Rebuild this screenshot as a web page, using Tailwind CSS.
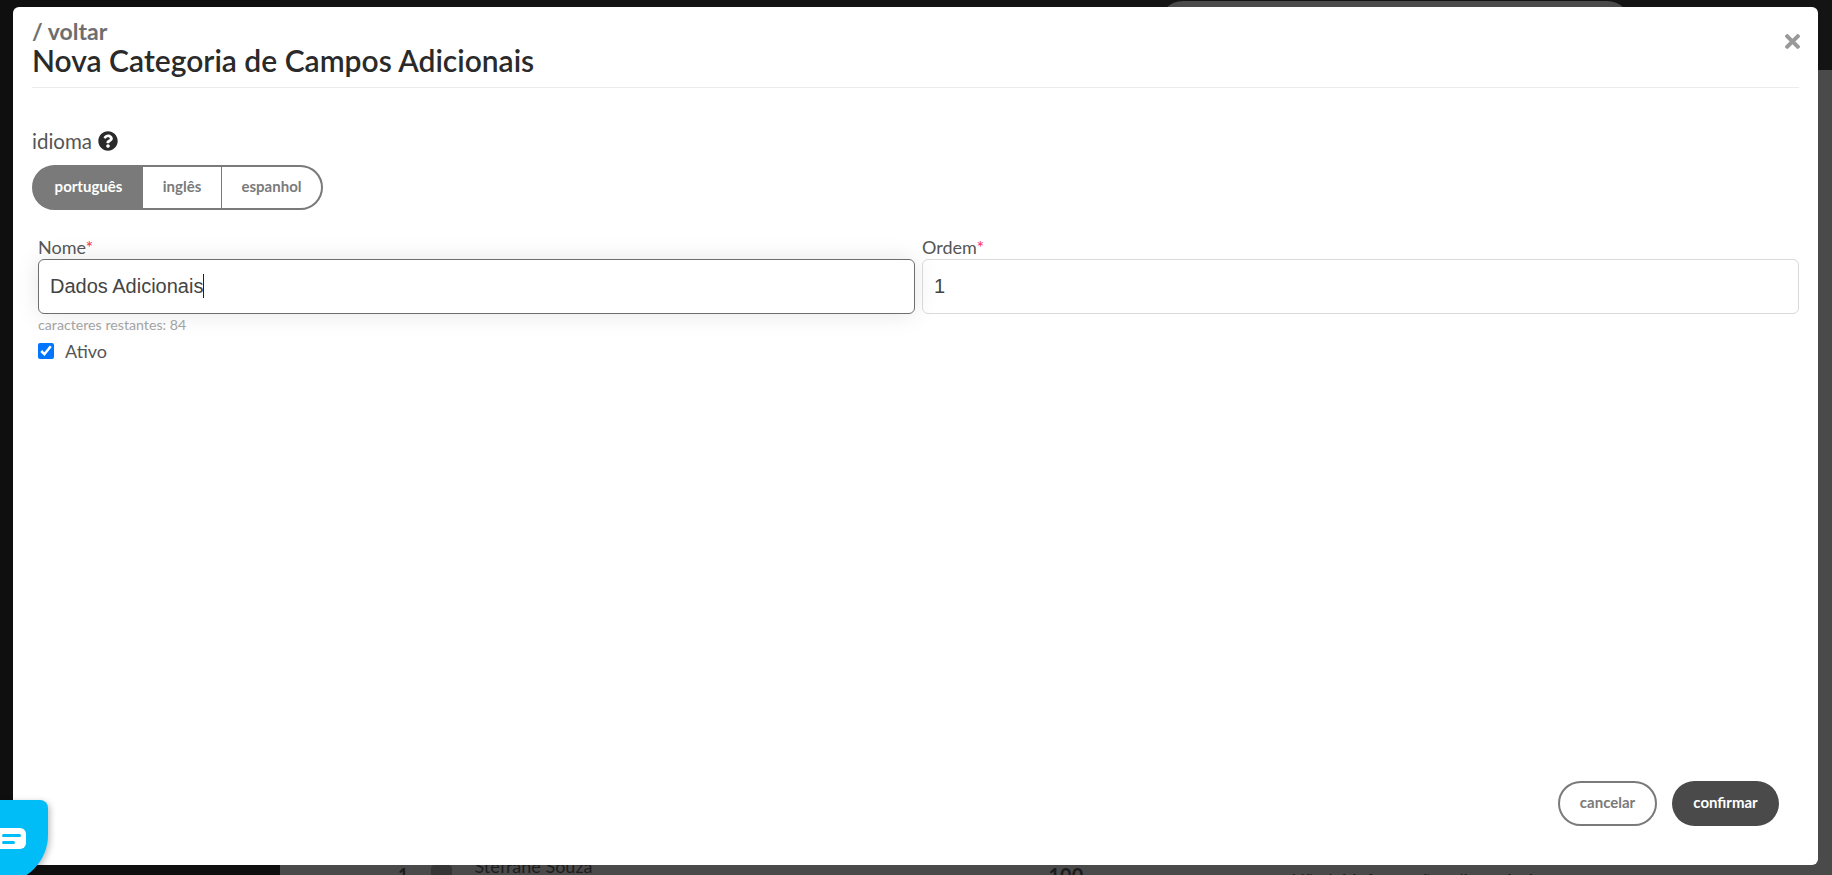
<!DOCTYPE html>
<html>

<head>
  <title>Nova Categoria de Campos Adicionais</title>
  <meta charset="UTF-8">
  <meta name="viewport" content="width=device-width, initial-scale=1.0">
  <script src="https://cdn.jsdelivr.net/npm/@tailwindcss/browser@4"></script>
</head>

<body class="h-[875px] overflow-hidden font-['Lato',sans-serif] bg-[#111111]">

  <!-- page behind the modal -->
  <div class="flex h-[875px]">
    <div class="w-[280px] bg-[#0f0f0f]"></div>
    <div class="flex-1 flex flex-col">
      <div class="h-[70px] bg-[#141414] flex justify-end pr-[201px]">
        <div class="w-[472px] h-[40px] rounded-t-[24px] mt-[1px] bg-[#4a4a4a]"></div>
      </div>
      <div class="flex-1 bg-[#4a4a4a] flex items-end text-[#1c1c1c]">
        <div class="h-[10px] flex items-start w-full">
          <span class="ml-[118px] text-lg font-bold leading-[18px] mt-[1px]">1</span>
          <span class="ml-[23px] w-[21px] h-[29px] shrink-0 bg-[#353535] rounded-t-[4px]"></span>
          <span class="ml-[22px] text-lg leading-[14px] -mt-[6px]">Stefrane Souza</span>
          <span class="ml-[456px] text-[20px] font-bold leading-[20px]">100</span>
          <span class="ml-[208px] text-[18px] leading-[18px] mt-[6px]">Não há informações disponíveis</span>
        </div>
      </div>
    </div>
  </div>

  <!-- modal -->
  <div class="absolute left-[13px] top-[7px] w-[1805px] h-[858px] bg-white rounded-[6px] flex flex-col px-[19px]">
    <div class="relative pt-[12px] border-b border-[#ececec] h-[81px]">
      <a class="block text-[23px] leading-[24px] font-bold text-[#6e6e6e]">/ voltar</a>
      <h1 class="text-[30px] leading-[34px] font-semibold text-[#2a2a2a]">Nova Categoria de Campos Adicionais</h1>
      <svg class="absolute right-[-1px] top-[27px] w-[15px] h-[15px] fill-[#999999]" viewBox="0 80 352 352">
        <path d="M242.72 256l100.07-100.07c12.28-12.28 12.28-32.19 0-44.48l-22.24-22.24c-12.28-12.28-32.19-12.28-44.48 0L176 189.28 75.93 89.21c-12.28-12.28-32.19-12.28-44.48 0L9.21 111.45c-12.28 12.28-12.28 32.19 0 44.48L109.28 256 9.21 356.07c-12.28 12.28-12.28 32.19 0 44.48l22.24 22.24c12.28 12.28 32.2 12.28 44.48 0L176 322.72l100.07 100.07c12.28 12.28 32.2 12.28 44.48 0l22.24-22.24c12.28-12.28 12.28-32.19 0-44.48L242.72 256z"/>
      </svg>
    </div>

    <div class="flex items-center gap-[6px] mt-[40px] h-[26px]">
      <span class="text-[20.5px] text-[#555555]">idioma</span>
      <svg class="w-[20px] h-[20px] fill-[#2a2a2a]" viewBox="0 0 512 512">
        <path d="M504 256c0 136.997-111.043 248-248 248S8 392.997 8 256C8 119.083 119.043 8 256 8s248 111.083 248 248zM262.655 90c-54.497 0-89.255 22.957-116.549 63.758-3.536 5.286-2.353 12.415 2.715 16.258l34.699 26.31c5.205 3.947 12.621 3.008 16.665-2.122 17.864-22.658 30.113-35.797 57.303-35.797 20.429 0 45.698 13.148 45.698 32.958 0 14.976-12.363 22.667-32.534 33.976C247.128 238.528 216 254.941 216 296v4c0 6.627 5.373 12 12 12h56c6.627 0 12-5.373 12-12v-1.333c0-28.462 83.186-29.647 83.186-106.667 0-58.002-60.165-102-116.531-102zM256 338c-25.365 0-46 20.635-46 46 0 25.364 20.635 46 46 46s46-20.636 46-46c0-25.365-20.635-46-46-46z"/>
      </svg>
    </div>

    <div class="flex w-[291px] h-[45px] mt-[11px] rounded-full border-2 border-[#7a7a7a] bg-[#7a7a7a] overflow-hidden text-[15px] font-bold text-[#7a7a7a]">
      <div class="w-[109px] pb-[2px] text-white flex items-center justify-center">português</div>
      <div class="w-[79px] pb-[2px] bg-white border-r border-[#7a7a7a] flex items-center justify-center">inglês</div>
      <div class="flex-1 pb-[2px] bg-white flex items-center justify-center">espanhol</div>
    </div>

    <div class="grid grid-cols-2 gap-x-[7px] mt-[26px] pl-[6px]">
      <div>
        <label class="block text-[18px] leading-[22px] text-[#555555]">Nome<span class="text-[#ff2d55]">*</span></label>
        <div class="mt-[1px] h-[55px] pb-[2px] flex items-center rounded-[6px] border border-[#6e6e6e] px-[11px] shadow-[0_0_25px_rgba(0,0,0,0.1)] font-['Liberation_Sans',sans-serif] text-[20px] text-[#444444]">Dados Adicionais<span class="w-px h-[24px] bg-[#222222]"></span></div>
        <p class="text-[14.2px] leading-[18px] mt-[2px] text-[#a3a3a3]">caracteres restantes: 84</p>
      </div>
      <div>
        <label class="block text-[18px] leading-[22px] text-[#555555]">Ordem<span class="text-[#ff2d55]">*</span></label>
        <input class="mt-[1px] w-full h-[55px] rounded-[6px] border border-[#d9d9d9] px-[11px] font-['Liberation_Sans',sans-serif] text-[20px] text-[#444444]" value="1">
      </div>
    </div>

    <label class="flex items-center gap-[11px] pl-[6px] mt-[6px] text-[18px] leading-[22px] text-[#555555]">
      <input type="checkbox" checked class="w-4 h-4 m-0 accent-[#0075ff]">
      Ativo
    </label>

    <div class="mt-auto mb-[39px] flex justify-end gap-[15px] pr-[20px] text-[15px] font-bold">
      <button class="w-[99px] h-[45px] pb-[2px] rounded-full border-2 border-[#7a7a7a] text-[#7a7a7a] bg-white">cancelar</button>
      <button class="w-[107px] h-[45px] pb-[2px] rounded-full bg-[#4a4a4a] text-white">confirmar</button>
    </div>
  </div>

  <!-- chat widget -->
  <div class="absolute left-0 top-[800px] w-[48px] h-[83px] bg-[#00bdf7] rounded-tr-[8px] rounded-br-[48px] shadow-[2px_2px_6px_rgba(0,0,0,0.25)]">
    <div class="absolute left-0 top-[28px] w-[26px] h-[21px] pl-[2px] bg-white rounded-r-[6px] flex flex-col justify-center gap-[4px]">
      <span class="block w-[19px] h-[3px] rounded-full bg-[#00bdf7]"></span>
      <span class="block w-[13px] h-[3px] rounded-full bg-[#00bdf7]"></span>
    </div>
  </div>

</body>
</html>
